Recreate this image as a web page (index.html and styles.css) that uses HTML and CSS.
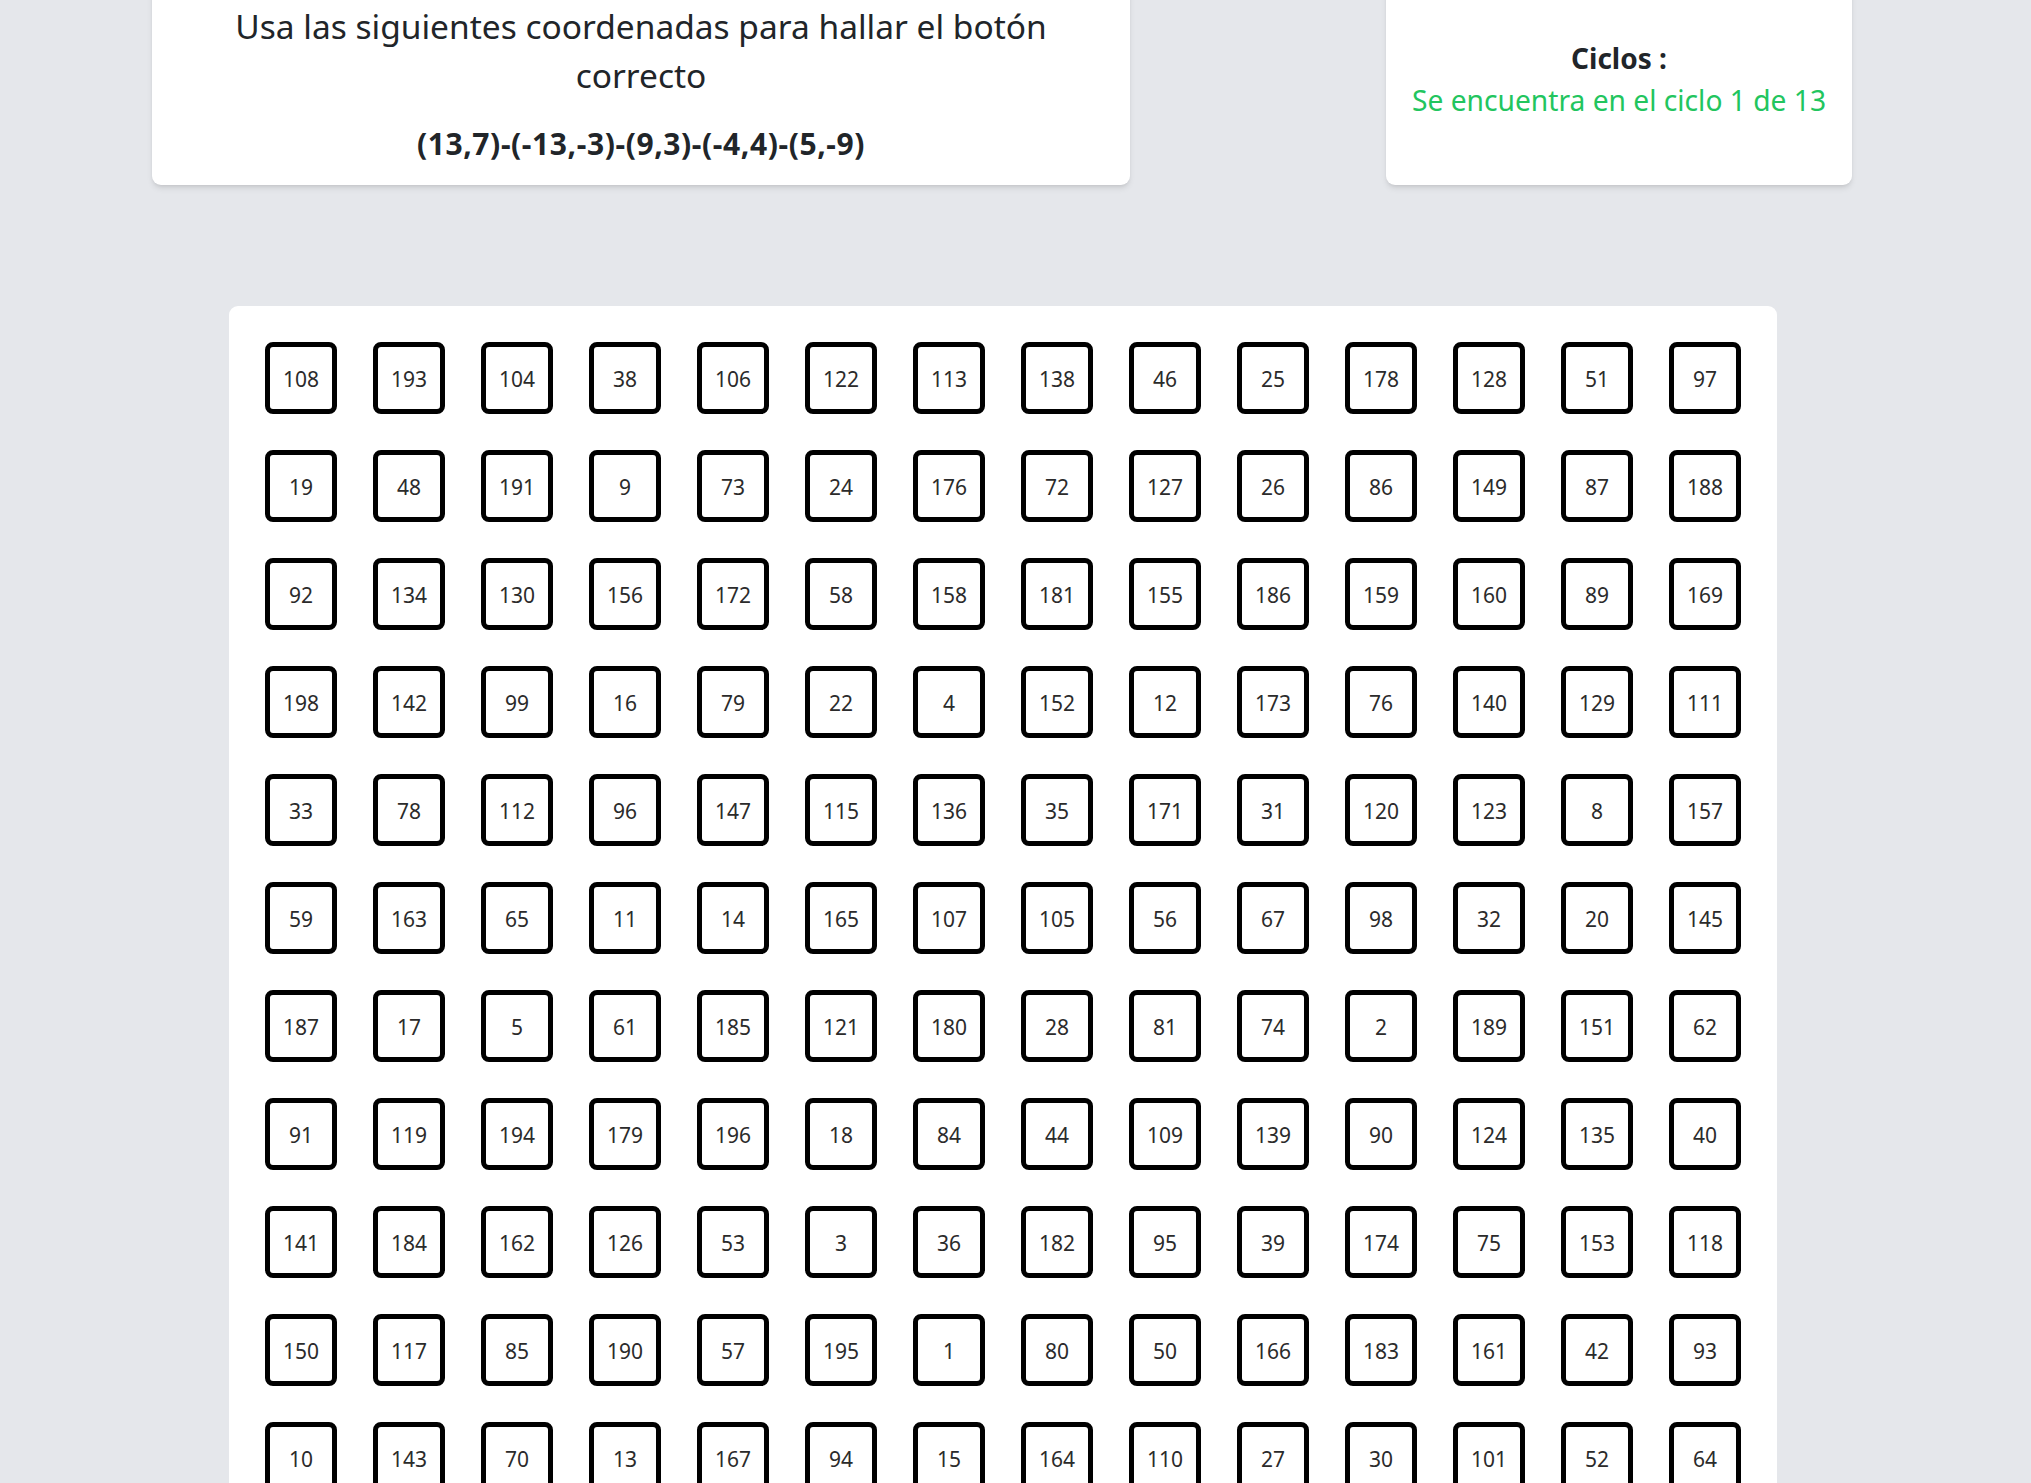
FILE: index.html
```html
<!DOCTYPE html>
<html lang="es">
<head>
<meta charset="utf-8">
<title>Ciclos</title>
<link rel="stylesheet" href="styles.css">
</head>
<body>
<main class="page">
  <section class="top-row">
    <div class="card card-instructions">
      <h2 class="instructions">Usa las siguientes coordenadas para hallar el botón correcto</h2>
      <p class="coords">(13,7)-(-13,-3)-(9,3)-(-4,4)-(5,-9)</p>
    </div>
    <div class="card card-cycles">
      <p class="cycles-label">Ciclos :</p>
      <p class="cycles-value">Se encuentra en el ciclo 1 de 13</p>
    </div>
  </section>
  <section class="board">
    <div class="grid" id="grid"></div>
  </section>
</main>
<script src="app.js"></script>
</body>
</html>
```

FILE: styles.css
```css
* { box-sizing: border-box; }
html, body { margin: 0; padding: 0; }
body {
  background: #e5e7eb;
  font-family: "Noto Sans", "Open Sans", sans-serif;
  color: #212529;
}
.page {
  width: 1700px;
  margin-left: 152px;
  margin-top: -25px;
}
.top-row {
  display: flex;
  justify-content: space-between;
  align-items: stretch;
}
.card {
  background: #fff;
  border-radius: 9px;
  box-shadow: 0 4px 6px -1px rgba(0,0,0,.1), 0 2px 4px -2px rgba(0,0,0,.1);
}
.card-instructions {
  width: 978px;
  padding: 27px 40px 23px;
  text-align: center;
}
.instructions {
  margin: 0;
  font-size: 33.5px;
  line-height: 49px;
  font-weight: 400;
  color: #212529;
}
.coords {
  margin: 26px 0 0;
  font-size: 30px;
  line-height: 36px;
  font-weight: 700;
  letter-spacing: 0.6px;
}
.card-cycles {
  width: 466px;
  display: flex;
  flex-direction: column;
  justify-content: center;
  align-items: center;
  text-align: center;
  padding-bottom: 2px;
}
.cycles-label {
  margin: 0;
  font-size: 28px;
  line-height: 42px;
  font-weight: 700;
}
.cycles-value {
  margin: 0;
  font-size: 28.2px;
  line-height: 42px;
  color: #22c55e;
}
.board {
  width: 1548px;
  margin: 121px 0 0 77px;
  background: #fff;
  border-radius: 9px;
  padding: 36px;
}
.grid {
  display: grid;
  grid-template-columns: repeat(14, 72px);
  gap: 36px;
}
.cell {
  width: 72px;
  height: 72px;
  border: 5px solid #000;
  border-radius: 8px;
  background: #fff;
  display: flex;
  align-items: center;
  justify-content: center;
  font-family: "Noto Sans", "Open Sans", sans-serif;
  font-size: 21px;
  color: #2b2b2b;
  padding: 2px 0 0;
  cursor: pointer;
}
```

FILE: app.js
```js
const nums = [
108,193,104,38,106,122,113,138,46,25,178,128,51,97,
19,48,191,9,73,24,176,72,127,26,86,149,87,188,
92,134,130,156,172,58,158,181,155,186,159,160,89,169,
198,142,99,16,79,22,4,152,12,173,76,140,129,111,
33,78,112,96,147,115,136,35,171,31,120,123,8,157,
59,163,65,11,14,165,107,105,56,67,98,32,20,145,
187,17,5,61,185,121,180,28,81,74,2,189,151,62,
91,119,194,179,196,18,84,44,109,139,90,124,135,40,
141,184,162,126,53,3,36,182,95,39,174,75,153,118,
150,117,85,190,57,195,1,80,50,166,183,161,42,93,
10,143,70,13,167,94,15,164,110,27,30,101,52,64,
6,7,21,23,29,34,37,41,43,45,47,49,54,55,
60,63,66,68,69,71,77,82,83,88,100,102,103,114,
116,125,131,132,133,137,144,146,148,154,168,170,175,177
];
const grid = document.getElementById('grid');
nums.forEach(n => {
  const b = document.createElement('button');
  b.className = 'cell';
  b.type = 'button';
  b.textContent = n;
  grid.appendChild(b);
});
```
